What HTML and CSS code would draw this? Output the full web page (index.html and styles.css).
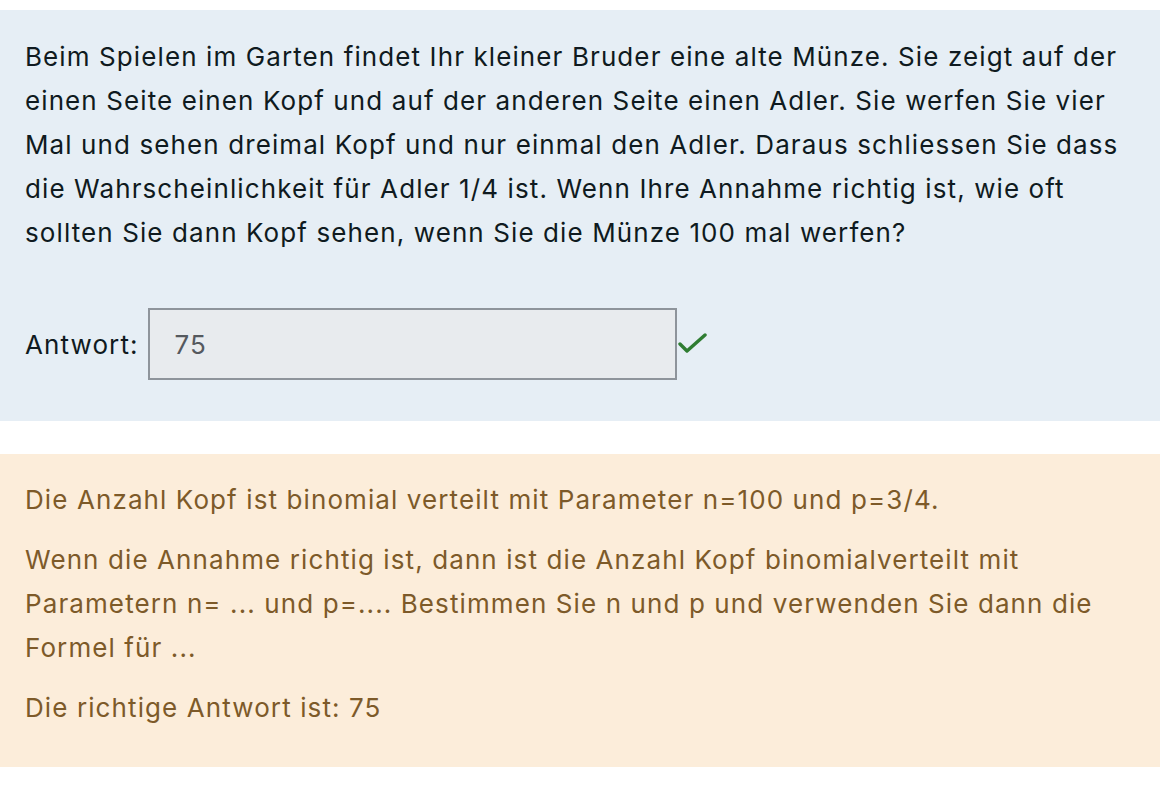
FILE: index.html
```html
<!DOCTYPE html>
<html lang="de">
<head>
<meta charset="utf-8">
<title>Frage</title>
<link rel="stylesheet" href="styles.css">
</head>
<body>
<div class="que">
  <div class="formulation">
    <p class="qtext">Beim Spielen im Garten findet Ihr kleiner Bruder eine alte Münze. Sie zeigt auf der einen Seite einen Kopf und auf der anderen Seite einen Adler. Sie werfen Sie vier Mal und sehen dreimal Kopf und nur einmal den Adler. Daraus schliessen Sie dass die Wahrscheinlichkeit für Adler 1/4 ist. Wenn Ihre Annahme richtig ist, wie oft sollten Sie dann Kopf sehen, wenn Sie die Münze 100 mal werfen?</p>
    <div class="ablock">
      <label class="alabel" for="ans">Antwort:</label>
      <input id="ans" class="answer" type="text" value="75" readonly>
      <svg class="check" width="30" height="24" viewBox="0 0 30 24" aria-label="Richtig">
        <path d="M2 12 L9 19 L27 3" fill="none" stroke="#2f7d32" stroke-width="3.4" stroke-linecap="round" stroke-linejoin="round"/>
      </svg>
    </div>
  </div>
  <div class="outcome">
    <p class="feedback">Die Anzahl Kopf ist binomial verteilt mit Parameter n=100 und p=3/4.</p>
    <p class="feedback">Wenn die Annahme richtig ist, dann ist die Anzahl Kopf binomialverteilt mit Parametern n= ... und p=.... Bestimmen Sie n und p und verwenden Sie dann die Formel für ...</p>
    <p class="feedback">Die richtige Antwort ist: 75</p>
  </div>
</div>
</body>
</html>
```

FILE: styles.css
```css
html, body {
  margin: 0;
  padding: 0;
  background: #ffffff;
}
body {
  padding-top: 10px;
  font-family: Inter, "Noto Sans", sans-serif;
  font-size: 26px;
  line-height: 44px;
  letter-spacing: 1.1px;
}
.que {
  display: flex;
  flex-direction: column;
  gap: 33px;
}
.formulation {
  background: #e6eef5;
  color: #0f1a20;
  padding: 25px 25px 41px 25px;
}
.qtext {
  margin: 0 0 53px 0;
}
.ablock {
  display: flex;
  align-items: center;
  height: 72px;
}
.alabel {
  margin-right: 9px;
  padding-top: 2px;
}
.answer {
  box-sizing: border-box;
  width: 529px;
  height: 72px;
  border: 2px solid #8e949b;
  background: #e8ebee;
  color: #55595e;
  font-family: inherit;
  font-size: 26px;
  letter-spacing: 1px;
  padding: 0 0 0 25px;
  margin: 0;
  outline: none;
}
.check {
  margin-left: 1px;
  margin-top: 0;
}
.outcome {
  background: #fcedda;
  color: #7d5a29;
  padding: 24px 25px 37px 25px;
  display: flex;
  flex-direction: column;
  gap: 16px;
}
.feedback {
  margin: 0;
}
```
